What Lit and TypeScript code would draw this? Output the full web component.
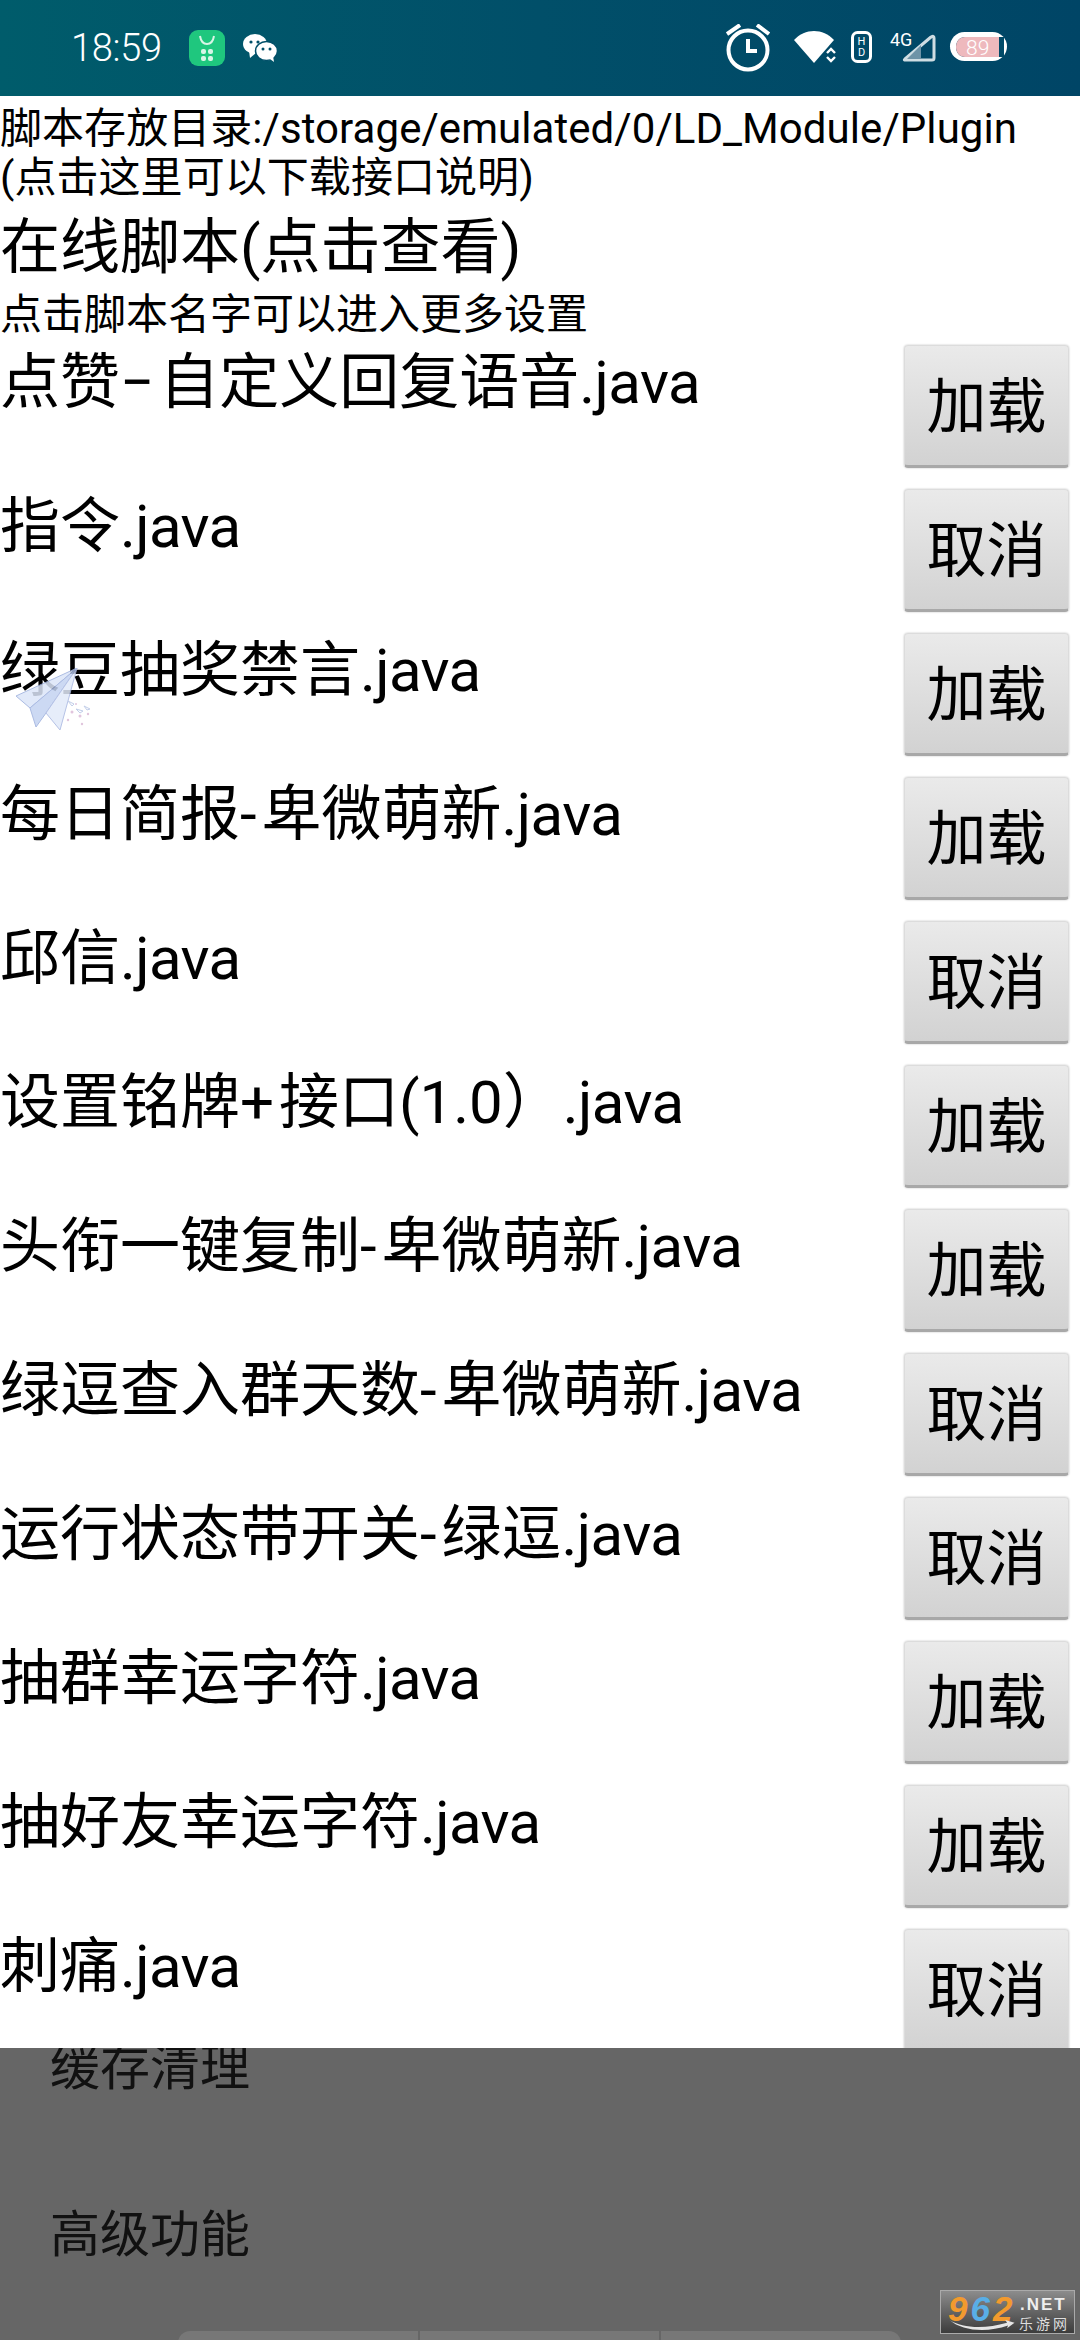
import { LitElement, html, css, svg } from 'lit';
import { customElement } from 'lit/decorators.js';

const rows: [string, string][] = [
  ['点赞−自定义回复语音', '加载'],
  ['指令', '取消'],
  ['绿豆抽奖禁言', '加载'],
  ['每日简报-卑微萌新', '加载'],
  ['邱信', '取消'],
  ['设置铭牌+接口(1.0）', '加载'],
  ['头衔一键复制-卑微萌新', '加载'],
  ['绿逗查入群天数-卑微萌新', '取消'],
  ['运行状态带开关-绿逗', '取消'],
  ['抽群幸运字符', '加载'],
  ['抽好友幸运字符', '加载'],
  ['刺痛', '取消'],
];

const storeIcon = svg`<svg class="store" width="36" height="36" viewBox="0 0 36 36">
  <rect width="36" height="36" rx="9" fill="#1fc77e"/>
  <path d="M11 6c1 6 4 8 7 8s6-2 7-8" fill="none" stroke="#d8f5e6" stroke-width="2"/>
  <rect x="12" y="19" width="5" height="5" rx="2" fill="#d8f5e6"/>
  <rect x="19" y="19" width="5" height="5" rx="2" fill="#d8f5e6"/>
  <rect x="12" y="26" width="5" height="5" rx="2" fill="#d8f5e6"/>
  <rect x="19" y="26" width="5" height="5" rx="2" fill="#d8f5e6"/>
</svg>`;

const wechatIcon = svg`<svg class="wechat" width="34" height="28" viewBox="0 0 34 28">
  <ellipse cx="12" cy="10" rx="12" ry="10" fill="#fff"/>
  <path d="M6 17l1 7 6-5z" fill="#fff"/>
  <ellipse cx="23.5" cy="17" rx="11" ry="9.500" fill="#fff" stroke="#014f69" stroke-width="1.500"/>
  <path d="M27 25l4 3-1-6z" fill="#fff"/>
  <circle cx="8" cy="8" r="1.600" fill="#014f69"/>
  <circle cx="15" cy="8" r="1.600" fill="#014f69"/>
  <circle cx="20" cy="15" r="1.500" fill="#014f69"/>
  <circle cx="27" cy="15" r="1.500" fill="#014f69"/>
</svg>`;

const statusRight = svg`<svg width="282" height="48" viewBox="727 25 282 48">
  <g fill="none" stroke="#fff" stroke-width="4">
    <circle cx="749" cy="51" r="19.500"/>
    <path d="M728 35l13-9M770 35l-12-9"/>
    <path d="M749 40v12h9"/>
  </g>
  <path d="M795 41c11-12 29-12 40 0l-20 23z" fill="#fff"/>
  <path d="M828 54l4-4 4 4M828 58l4 4 4-4" fill="none" stroke="#fff" stroke-width="2.400"/>
  <rect x="853.500" y="33.500" width="18" height="29" rx="5" fill="none" stroke="#fff" stroke-width="3"/>
  <text x="862.500" y="46" class="hd">H</text>
  <text x="862.500" y="57" class="hd">D</text>
  <text x="891" y="47" class="net">4G</text>
  <path d="M906 60l26-22c2-1 3-1 3 1v20c0 2-1 2-2 2h-26c-2 0-2-0-1-1z" fill="none" stroke="#cfdde3" stroke-width="3" stroke-linejoin="round"/>
  <path d="M908 60l14-14v14z" fill="#6e93a7"/>
  <rect x="951" y="33" width="57" height="29" rx="14.500" fill="#fff"/>
  <path d="M957 48c0-6 4-10 9-10h39v20h-39c-5 0-9-4-9-10z" fill="#014a68"/>
  <path d="M957 48c0-6 4-10 9-10h34v20h-34c-5 0-9-4-9-10z" fill="#eeb9bd"/>
  <text x="967" y="56" class="batt">89</text>
</svg>`;

const plane = svg`<svg class="plane" width="80" height="66" viewBox="0 0 80 66">
  <path d="M61 0L0 28l14 12z" fill="#dce6f8" stroke="#9db0de" stroke-width="1"/>
  <path d="M61 0L14 40l6 19 10-14z" fill="#c4d3f1" stroke="#9db0de" stroke-width="1"/>
  <path d="M61 0L30 45l14 17z" fill="#e2eafa" stroke="#a9b8e2" stroke-width="1"/>
  <g fill="none" stroke="#b7c6e6" stroke-width="1">
    <path d="M52 33l6 3-2 2zM60 41l7 2-3 2zM68 38l6 3-3 1z"/>
  </g>
  <g fill="#dcbcd8">
    <circle cx="56" cy="44" r="1.500"/><circle cx="64" cy="48" r="1.500"/>
    <circle cx="72" cy="46" r="1.200"/><circle cx="52" cy="52" r="1.200"/>
    <circle cx="66" cy="56" r="1.200"/><circle cx="60" cy="36" r="1"/>
  </g>
</svg>`;

@customElement('app-root')
export class AppRoot extends LitElement {
  static styles = css`
    :host {
      display: block;
      width: 1080px;
      height: 2340px;
      position: relative;
      overflow: hidden;
      background: #fff;
      color: #000;
      font-family: Roboto, 'Noto Sans CJK SC', sans-serif;
    }
    .status {
      height: 96px;
      box-sizing: border-box;
      padding: 0 72px 0 71px;
      display: flex;
      align-items: center;
      justify-content: space-between;
      background: linear-gradient(90deg, #005c6b, #014f69 50%, #004566);
    }
    .status-left {
      display: flex;
      align-items: center;
      color: #fff;
      font-size: 38px;
      font-weight: 300;
      letter-spacing: -0.3px;
    }
    .store { margin-left: 27px; }
    .wechat { margin-left: 18px; }
    .hd {
      fill: #fff;
      font-size: 11px;
      text-anchor: middle;
    }
    .net {
      fill: #fff;
      font-size: 18px;
    }
    .batt {
      fill: #fff;
      font-size: 21px;
      font-weight: 300;
    }
    .head {
      font-size: 42px;
      line-height: 49px;
      height: 98px;
      padding-top: 8px;
      white-space: nowrap;
      letter-spacing: 0.06px;
    }
    .title {
      font-size: 60px;
      line-height: 70px;
      margin-top: 11px;
    }
    .hint {
      font-size: 42px;
      line-height: 49px;
      margin-top: 7px;
    }
    .list {
      margin-top: 6px;
    }
    .row {
      height: 144px;
      display: flex;
      justify-content: space-between;
      align-items: flex-start;
      font-size: 60px;
      line-height: 70px;
      white-space: nowrap;
    }
    .row .name {
      margin-top: 3px;
    }
    .sep {
      letter-spacing: 5px;
    }
    .ext {
      letter-spacing: -0.6px;
    }
    .btn {
      width: 165px;
      height: 123px;
      margin-right: 11px;
      padding-top: 4px;
      box-sizing: border-box;
      display: flex;
      align-items: center;
      justify-content: center;
      border-radius: 4px;
      background: linear-gradient(#eaeaea, #d2d2d2);
      border: 1px solid #dcdcdc;
      border-bottom: 3px solid #a8a8a8;
      box-shadow: 0 0 2px #bbb;
      font-size: 60px;
    }
    .panel {
      position: absolute;
      left: 0;
      right: 0;
      bottom: 0;
      height: 292px;
      overflow: hidden;
      background: #666;
      color: #111;
      font-size: 50px;
      line-height: 60px;
      padding-left: 50px;
    }
    .menu {
      height: 167px;
      margin-top: -10px;
    }
    .menu + .menu {
      margin-top: 0;
    }
    .tabs {
      position: absolute;
      left: 178px;
      width: 723px;
      top: 283px;
      height: 20px;
      display: flex;
      gap: 2px;
    }
    .tabs span {
      flex: 1;
      background: #777;
    }
    .tabs span:first-child { border-radius: 12px 0 0 0; }
    .tabs span:last-child { border-radius: 0 12px 0 0; }
    .plane {
      position: absolute;
      left: 16px;
      top: 668px;
      opacity: 0.85;
    }
    .logo {
      position: absolute;
      left: 940px;
      top: 2290px;
      width: 135px;
      height: 44px;
      box-sizing: border-box;
      border: 1px solid #aaa;
      background: linear-gradient(#8c8c8c, #3c3c3c);
      overflow: hidden;
      font-family: 'Liberation Sans', sans-serif;
      font-weight: 700;
      font-style: italic;
      line-height: 1;
    }
    .logo .num {
      position: absolute;
      left: 7px;
      top: 0;
      font-size: 35px;
      letter-spacing: 3px;
      color: #f29a2e;
    }
    .logo .num i { color: #59aee6; }
    .logo .net {
      position: absolute;
      left: 79px;
      top: 5px;
      font-size: 17px;
      font-style: normal;
      letter-spacing: 2px;
      color: #eee;
    }
    .logo .cn {
      position: absolute;
      left: 78px;
      top: 25px;
      font-size: 14px;
      font-style: normal;
      font-weight: 400;
      letter-spacing: 3px;
      color: #ddd;
      font-family: 'Noto Sans CJK SC', sans-serif;
    }
    .logo svg {
      position: absolute;
      left: 7px;
      top: 29px;
    }
  `;

  // the hyphens sit wider in the reference than Roboto sets them
  private renderName(name: string) {
    return name
      .split(/([-−+])/)
      .map((part, i) => (i % 2 ? html`<span class="sep">${part}</span>` : part));
  }

  render() {
    return html`
      <div class="status">
        <div class="status-left">
          <span>18:59</span>
          ${storeIcon} ${wechatIcon}
        </div>
        ${statusRight}
      </div>
      <div class="head">脚本存放目录:/storage/emulated/0/LD_Module/Plugin<br />(点击这里可以下载接口说明)</div>
      <div class="title">在线脚本(点击查看)</div>
      <div class="hint">点击脚本名字可以进入更多设置</div>
      <div class="list">
        ${rows.map(
          ([name, action]) => html`
            <div class="row">
              <span class="name">${this.renderName(name)}<span class="ext">.java</span></span>
              <span class="btn">${action}</span>
            </div>
          `
        )}
      </div>
      ${plane}
      <div class="panel">
        <div class="menu">缓存清理</div>
        <div class="menu">高级功能</div>
        <div class="tabs"><span></span><span></span><span></span></div>
      </div>
      <div class="logo">
        <span class="num">9<i>6</i>2</span>
        <span class="net">.NET</span>
        <span class="cn">乐游网</span>
        <svg width="68" height="13" viewBox="0 0 70 14">
          <path d="M0 0c14 9 38 10 62 3l-2-3 10 3-8 6 1-3C40 14 14 12 0 0z" fill="#e6e6e6"/>
        </svg>
      </div>
    `;
  }
}
